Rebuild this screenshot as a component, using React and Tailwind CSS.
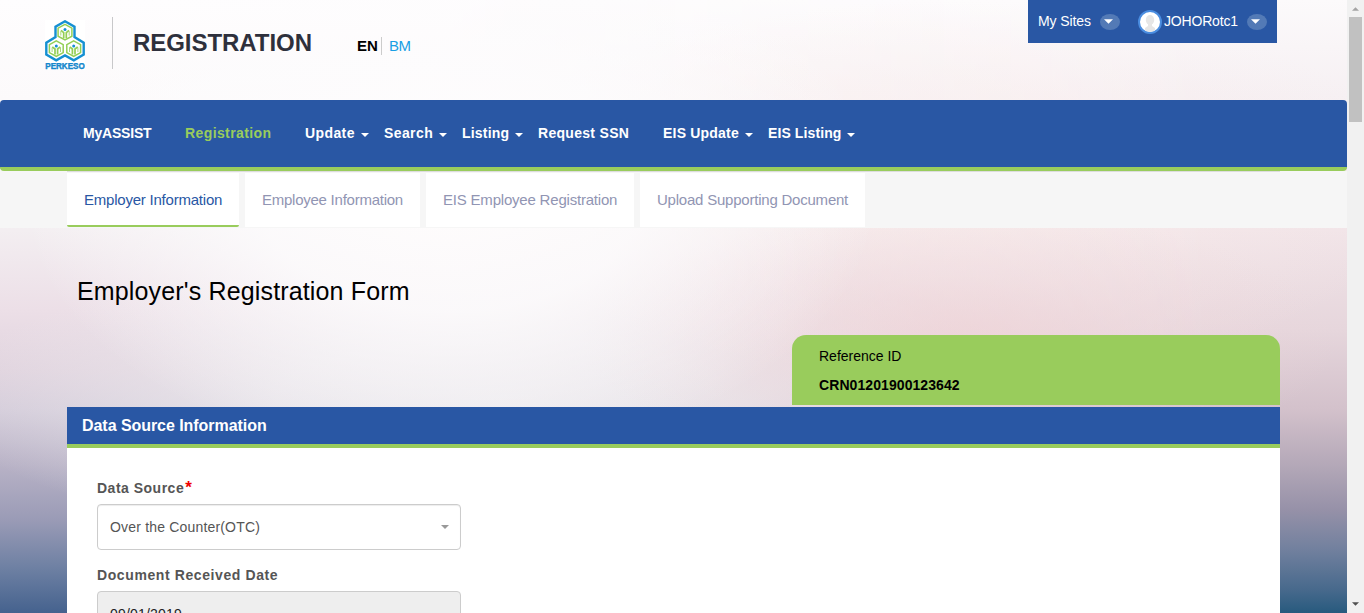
import React from "react";

function Caret({ className }) {
  return (
    <svg viewBox="0 0 8 4" className={className} fill="currentColor">
      <path d="M0 0H8L4 4Z" />
    </svg>
  );
}

function Cell({ x, y }) {
  return (
    <g transform={`translate(${x} ${y})`} fill="none" stroke="#93cf55">
      <path d="M0-7.8 6.9-4V4L0 7.8-6.9 4V-4Z" strokeWidth="1.5" />
      <path d="M-4-1.8-1.3.4V6M4-1.8 1.3.4V6" strokeWidth="1.7" />
      <path d="M-4.2-1V3.4M4.2-1V3.4" strokeWidth="0.8" />
      <circle cy="-2.7" r="1.5" fill="#1590d2" stroke="none" />
    </g>
  );
}

function Logo() {
  return (
    <div className="flex h-[50px] w-10 flex-col items-center bg-white">
      <svg width="40" height="43" viewBox="0 0 40 43" className="shrink-0">
        <path
          d="M20 1.3 29.5 6.8V17L38.7 22.6V34.6L28.8 40.3 20 35.4 11.2 40.3 1.3 34.6V22.6L10.5 17V6.8Z"
          fill="white"
          stroke="#1590d2"
          strokeWidth="2.4"
        />
        <Cell x={20} y={12.2} />
        <Cell x={11.3} y={28.6} />
        <Cell x={28.7} y={28.6} />
      </svg>
      <svg width="40" height="7" viewBox="0 0 40 7" className="shrink-0">
        <text
          x="0.3"
          y="6.4"
          textLength="39.4"
          lengthAdjust="spacingAndGlyphs"
          className="font-['Liberation_Sans',sans-serif] text-[8.2px] font-bold"
          fill="#1587cc"
          stroke="#1587cc"
          strokeWidth="0.4"
        >
          PERKESO
        </text>
      </svg>
    </div>
  );
}

function Pill() {
  return (
    <span className="flex h-4 w-5 items-center justify-center rounded-[50%] bg-[#537ab6] text-white">
      <Caret className="-ml-1 h-[5px] w-[9px]" />
    </span>
  );
}

function UserBar() {
  return (
    <div className="ml-auto mr-[70px] flex h-[43px] w-[249px] items-center bg-[#2957a4] pl-[10px] text-[14px] text-white">
      <span className="w-[62px] tracking-[-0.1px]">My Sites</span>
      <Pill />
      <span className="ml-[18px] mt-px flex size-6 items-center justify-center overflow-hidden rounded-full border-2 border-[#4a8de0] bg-white">
        <svg width="20" height="20" viewBox="0 0 20 20" fill="#e6e6e6">
          <ellipse cx="10" cy="8" rx="4.2" ry="5" />
          <path d="M8 11h4v3l3 2v4H5v-4l3-2Z" />
        </svg>
      </span>
      <span className="ml-[2px] w-[83px] tracking-[-0.18px]">JOHORotc1</span>
      <Pill />
    </div>
  );
}

const NAV = [
  ["MyASSIST", false, "w-[102px] tracking-[-0.2px]"],
  ["Registration", false, "w-[120px] tracking-[0.4px] text-[#99cc5c]"],
  ["Update", true, "w-[79px] tracking-[0.4px]"],
  ["Search", true, "w-[78px] tracking-[0.4px]"],
  ["Listing", true, "w-[76px] tracking-[0.2px]"],
  ["Request SSN", false, "w-[125px] tracking-[0.3px]"],
  ["EIS Update", true, "w-[105px] tracking-[0.2px]"],
  ["EIS Listing", true, "w-[102px] tracking-[0.1px]"],
];

const TABS = [
  ["Employer Information", "w-[172px] text-[#2957a4] border-b-2 border-[#99cc5c] rounded-b-[2px] tracking-[-0.22px]"],
  ["Employee Information", "w-[175px] text-[#9195b3] border-b-2 border-white tracking-[-0.25px]"],
  ["EIS Employee Registration", "w-[208px] text-[#9195b3] border-b-2 border-white tracking-[-0.2px]"],
  ["Upload Supporting Document", "w-[225px] text-[#9195b3] border-b-2 border-white tracking-[-0.22px]"],
];

function Backdrop({ children }) {
  return (
    <div className="flex h-[613px] w-[1347px] flex-col overflow-hidden bg-[linear-gradient(180deg,#fefdfe_0px,#fcfafb_100px,#f3eef1_230px,#ecdfe7_310px,#e0d3de_370px,#d3cbd9_410px,#b8b2c6_465px,#9a9bb6_520px,#6c7fa2_570px,#45628e_613px)]">
      <div className="absolute inset-0 h-full w-full max-w-[1347px] bg-[linear-gradient(180deg,#fcfafb_0px,#f6f0f3_95px,#f1e4e8_230px,#e6d6dc_330px,#d3c1cb_410px,#b4a8b8_465px,#9691a8_510px,#71809e_550px,#47698c_590px,#275a7e_613px)] [mask-image:linear-gradient(90deg,transparent_30%,black_90%)]" />
      <div className="absolute inset-0 max-w-[1347px] bg-[radial-gradient(ellipse_430px_270px_at_450px_190px,rgba(255,253,253,0.95)_0%,rgba(253,252,253,0.85)_45%,rgba(245,243,245,0)_100%),radial-gradient(ellipse_380px_130px_at_960px_340px,rgba(239,210,214,0.7)_0%,rgba(240,216,220,0.4)_50%,rgba(243,225,228,0)_100%),radial-gradient(ellipse_480px_190px_at_950px_190px,rgba(250,236,234,0.7)_0%,rgba(250,236,234,0)_100%),radial-gradient(ellipse_560px_150px_at_500px_400px,rgba(238,236,239,0.9)_0%,rgba(238,236,239,0.75)_40%,rgba(238,235,239,0)_100%)]" />
      <div className="relative flex min-h-0 flex-1 flex-col">{children}</div>
    </div>
  );
}

export default function App() {
  return (
    <div className="relative flex h-[613px] w-[1364px] overflow-hidden font-['Liberation_Sans',Arial,sans-serif]">
      <Backdrop>
        <header className="flex h-[100px] shrink-0 items-start">
          <div className="ml-[45px] mt-5"><Logo /></div>
          <div className="ml-[27px] mt-[17px] h-[52px] w-px bg-[#c8c8ca]" />
          <h1 className="ml-5 mt-[28px] w-[224px] text-[24px] leading-[30px] font-bold tracking-[-0.05px] text-[#2e303c] whitespace-nowrap">REGISTRATION</h1>
          <div className="mt-[37px] flex h-[18px] items-center text-[15px] leading-[18px]">
            <span className="w-[24px] font-bold text-black">EN</span>
            <span className="h-[18px] w-px bg-[#ccc]" />
            <span className="ml-[7px] tracking-[-0.5px] text-[#189fe4]">BM</span>
          </div>
          <UserBar />
        </header>

        <nav className="flex h-[71px] shrink-0 items-center rounded-[4px] border-b-4 border-[#99cc5c] bg-[#2957a4] pl-[83px] text-[14px] font-bold text-white">
          {NAV.map(([label, menu, cls]) => (
            <div key={label} className={`flex shrink-0 items-center whitespace-nowrap ${cls}`}>
              {label}
              {menu && <Caret className="ml-auto mr-[15px] mt-0.5 h-1 w-2" />}
            </div>
          ))}
        </nav>

        <div className="h-[57px] shrink-0 bg-[#f6f6f6] pl-[67px]">
          <div className="flex h-[56px] w-[1213px] gap-[6px] border-t border-[#ddd] pt-px">
            {TABS.map(([label, cls]) => (
              <div key={label} className={`flex items-center whitespace-nowrap bg-white pl-[17px] pt-[2px] text-[15px] ${cls}`}>
                {label}
              </div>
            ))}
          </div>
        </div>

        <main className="flex min-h-0 flex-1 flex-col pl-[67px]">
          <h2 className="ml-[10px] mt-[47px] h-[60px] text-[25px] leading-[32px] tracking-[0.15px] text-black">Employer's Registration Form</h2>
          <div className="ml-[725px] flex h-[70px] w-[488px] shrink-0 flex-col rounded-t-[14px] bg-[#99cc5c] pl-[27px] pt-[11px] text-[14px] leading-5 text-black">
            <span>Reference ID</span>
            <span className="mt-[9px] font-bold tracking-[0.08px]">CRN01201900123642</span>
          </div>
          <section className="mt-[2px] flex h-[206px] w-[1213px] shrink-0 flex-col bg-white">
            <h3 className="h-[41px] shrink-0 border-b-4 border-[#99cc5c] bg-[#2957a4] pl-[15px] text-[16px] leading-[37px] font-bold text-white">
              <span className="tracking-[-0.05px]">Data Source Information</span>
            </h3>
            <div className="flex flex-col pl-[30px] pt-[31px]">
              <label className="h-[25px] text-[14px] leading-[18px] font-bold tracking-[0.5px] text-[#555]">
                Data Source<span className="ml-px text-[17px] leading-none text-[#f00000]">*</span>
              </label>
              <div className="flex h-[46px] w-[364px] items-center justify-between rounded-[4px] border border-[#ccc] bg-white pl-3 pr-[11px] text-[14px] text-[#555] shadow-[inset_0_1px_1px_rgba(0,0,0,0.075)]">
                <span className="tracking-[0.18px]">Over the Counter(OTC)</span>
                <Caret className="h-1 w-2 text-[#999]" />
              </div>
              <label className="mt-4 h-[25px] text-[14px] leading-[18px] font-bold tracking-[0.6px] text-[#555]">Document Received Date</label>
              <div className="flex h-[46px] w-[364px] shrink-0 items-center rounded-[4px] border border-[#ccc] bg-[#eee] pl-3 text-[14px] tracking-[0.2px] text-[#222]">09/01/2019</div>
            </div>
          </section>
        </main>
      </Backdrop>

      <aside className="flex h-[613px] w-[17px] flex-col items-center bg-[#f1f1f1]">
        <Caret className="mt-[7px] h-1 w-[7px] rotate-180 text-[#a3a3a3]" />
        <div className="mt-[6px] h-[105px] w-[13px] bg-[#c1c1c1]" />
        <Caret className="mt-auto mb-[7px] h-1 w-[7px] text-[#505050]" />
      </aside>
    </div>
  );
}
